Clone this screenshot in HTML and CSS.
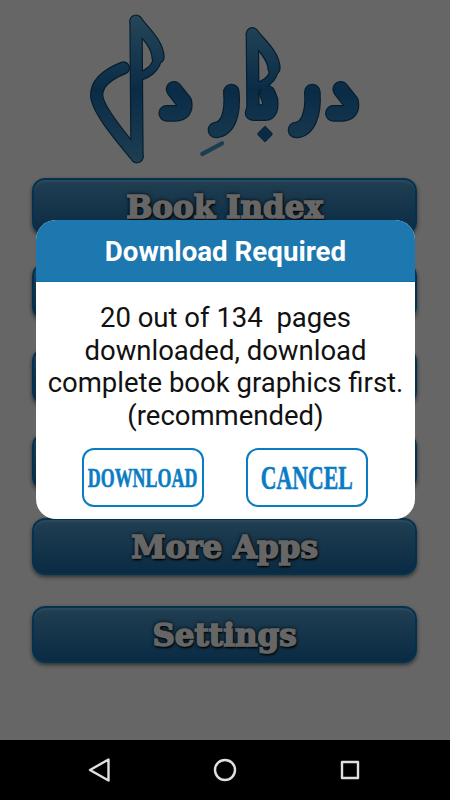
FILE: index.html
```html
<!DOCTYPE html>
<html lang="en">
<head>
<meta charset="utf-8">
<title>Download Required</title>
<link rel="stylesheet" href="styles.css">
</head>
<body>
<div class="screen">
  <main class="home">
    <svg class="logo" viewBox="0 0 930 540" width="310" height="180" role="img" aria-label="Darbar-e-Dil logo">
      <defs>
        <linearGradient id="ink" gradientUnits="userSpaceOnUse" x1="0" y1="50" x2="0" y2="490">
          <stop offset="0" stop-color="#5fb0dc"/>
          <stop offset="0.5" stop-color="#1a6db0"/>
          <stop offset="1" stop-color="#4a9ccc"/>
        </linearGradient>
        <g id="thin">
          <path d="M262 172 C262 205 228 224 208 230"/>
          <path d="M612 205 C612 240 578 256 556 262"/>
        </g>
        <g id="mid">
          <path d="M198 64 L201 470"/>
          <path d="M198 64 C216 90 264 130 264 172"/>
          <path d="M160 204 C110 224 80 252 80 285 C80 330 165 425 201 470"/>
          <path d="M547 102 L549 338"/>
          <path d="M547 102 C564 125 612 165 612 205"/>
        </g>
        <g id="thick">
          <path d="M312 268 L342 306 Q348 340 316 340 L290 340"/>
          <path d="M812 268 L842 306 Q848 340 816 340 L790 340"/>
          <path d="M727 276 C732 345 712 388 678 390"/>
          <path d="M549 338 L585 338 Q604 338 600 300 L592 280"/>
          <path d="M484 276 C490 345 472 386 438 390"/>
        </g>
      </defs>
      <g class="logo-edge">
        <use href="#thin" class="w-thin"/>
        <use href="#mid" class="w-mid"/>
        <use href="#thick" class="w-thick"/>
        <path class="logo-dot" d="M585 382 L604 402 L585 422 L566 402 Z"/>
      </g>
      <g class="logo-ink">
        <use href="#thin" class="w-thin"/>
        <use href="#mid" class="w-mid"/>
        <use href="#thick" class="w-thick"/>
        <path class="logo-dot" d="M585 382 L604 402 L585 422 L566 402 Z"/>
      </g>
      <path class="logo-kasra" d="M397 462 L456 430"/>
    </svg>
    <nav class="menu">
      <div class="menu-btn">Book Index</div>
      <div class="menu-btn"></div>
      <div class="menu-btn"></div>
      <div class="menu-btn"></div>
      <div class="menu-btn">More Apps</div>
      <div class="menu-btn menu-btn-last">Settings</div>
    </nav>
  </main>
  <div class="scrim"></div>
  <section class="dialog">
    <h1 class="dialog-title">Download Required</h1>
    <div class="dialog-body">
      <p class="dialog-text">20 out of 134&nbsp; pages<br>downloaded, download<br>complete book graphics first.<br>(recommended)</p>
      <div class="dialog-actions">
        <button class="action"><span class="action-label">DOWNLOAD</span></button>
        <button class="action action-cancel"><span class="action-label">CANCEL</span></button>
      </div>
    </div>
  </section>
  <footer class="navbar">
    <svg class="nav-icon" viewBox="0 0 24 24" width="24" height="24"><path d="M20.5 1.5 V22.5 L2 12 Z"/></svg>
    <svg class="nav-icon" viewBox="0 0 24 24" width="24" height="24"><circle cx="12" cy="12" r="10"/></svg>
    <svg class="nav-icon" viewBox="0 0 24 24" width="24" height="24"><rect x="4" y="4" width="16" height="16"/></svg>
  </footer>
</div>
</body>
</html>
```
FILE: styles.css
```css
* { box-sizing: border-box; }
html, body { margin: 0; padding: 0; }
body { font-family: Roboto, "Liberation Sans", sans-serif; }
.screen {
  position: relative;
  width: 450px;
  height: 800px;
  display: flex;
  flex-direction: column;
  overflow: hidden;
  background: #fff;
}
.home { flex: 1; display: flex; flex-direction: column; }
.logo { display: block; margin: 0 0 -2px 70px; flex: none; }
.logo-edge, .logo-ink { fill: none; stroke-linecap: round; stroke-linejoin: round; }
.logo-edge { stroke: #0d4a70; }
.logo-ink { stroke: url(#ink); }
.logo-edge .w-thin { stroke-width: 28px; }
.logo-edge .w-mid { stroke-width: 40px; }
.logo-edge .w-thick { stroke-width: 50px; }
.logo-ink .w-thin { stroke-width: 21px; }
.logo-ink .w-mid { stroke-width: 33px; }
.logo-ink .w-thick { stroke-width: 43px; }
.logo-edge .logo-dot { fill: #0d4a70; stroke-width: 8px; }
.logo-ink .logo-dot { fill: #1a6db0; stroke-width: 2px; }
.logo-kasra { fill: none; stroke: #4a9ccc; stroke-width: 13; stroke-linecap: round; }
.menu {
  width: 385px;
  margin-left: 32px;
  display: flex;
  flex-direction: column;
  gap: 28px;
}
.menu-btn {
  height: 57px;
  border: 2px solid #087dc6;
  border-radius: 13px;
  background: linear-gradient(#5ba8de 0, #4b97c8 12%, #1a6caa 100%);
  box-shadow: inset 0 2px 0 #6db4e0, 0 2px 4px rgba(0, 0, 0, .55);
  color: #fff;
  font-family: "DejaVu Serif", serif;
  font-weight: 700;
  font-size: 31px;
  -webkit-text-stroke: 1.5px #fff;
  text-shadow: 1px 2px 2px #000, 0 0 3px #000, 0 0 5px #000;
  display: flex;
  align-items: center;
  justify-content: center;
}
.menu-btn-last { margin-top: 3px; }
.scrim { position: absolute; inset: 0; background: rgba(0, 0, 0, .6); }
.dialog {
  position: absolute;
  left: 36px;
  top: 220px;
  width: 379px;
  height: 299px;
  border-radius: 20px;
  overflow: hidden;
  background: #fff;
  display: flex;
  flex-direction: column;
}
.dialog-title {
  margin: 0;
  height: 62px;
  flex: none;
  background: #1c78ae;
  border-bottom: 1px solid #136fa8;
  color: #fff;
  font-size: 27.7px;
  font-weight: 700;
  line-height: 64px;
  text-align: center;
}
.dialog-body { flex: 1; display: flex; flex-direction: column; align-items: center; }
.dialog-text {
  margin: 20px 0 0;
  font-size: 27.5px;
  line-height: 32.5px;
  color: #111;
  text-align: center;
  white-space: nowrap;
}
.dialog-actions { margin: 16px 1px 0 0; display: flex; gap: 42px; }
.action {
  width: 122px;
  height: 59px;
  padding: 0;
  background: #fff;
  border: 2px solid #0a7cc4;
  border-radius: 12px;
  color: #0a7cc4;
  font-family: "Liberation Serif", serif;
  font-weight: 700;
  font-size: 28px;
  display: flex;
  align-items: center;
  justify-content: center;
}
.action-label { display: inline-block; transform: scaleX(.64); white-space: nowrap; -webkit-text-stroke: .6px #0a7cc4; }
.action-cancel { font-size: 34px; }
.action-cancel .action-label { transform: scaleX(.64); }
.navbar {
  position: relative;
  height: 60px;
  flex: none;
  background: #000;
  display: flex;
  align-items: center;
  justify-content: space-between;
  padding: 0 88px;
}
.nav-icon { fill: none; stroke: #e0e0e0; stroke-width: 2.4; stroke-linejoin: round; }
```
